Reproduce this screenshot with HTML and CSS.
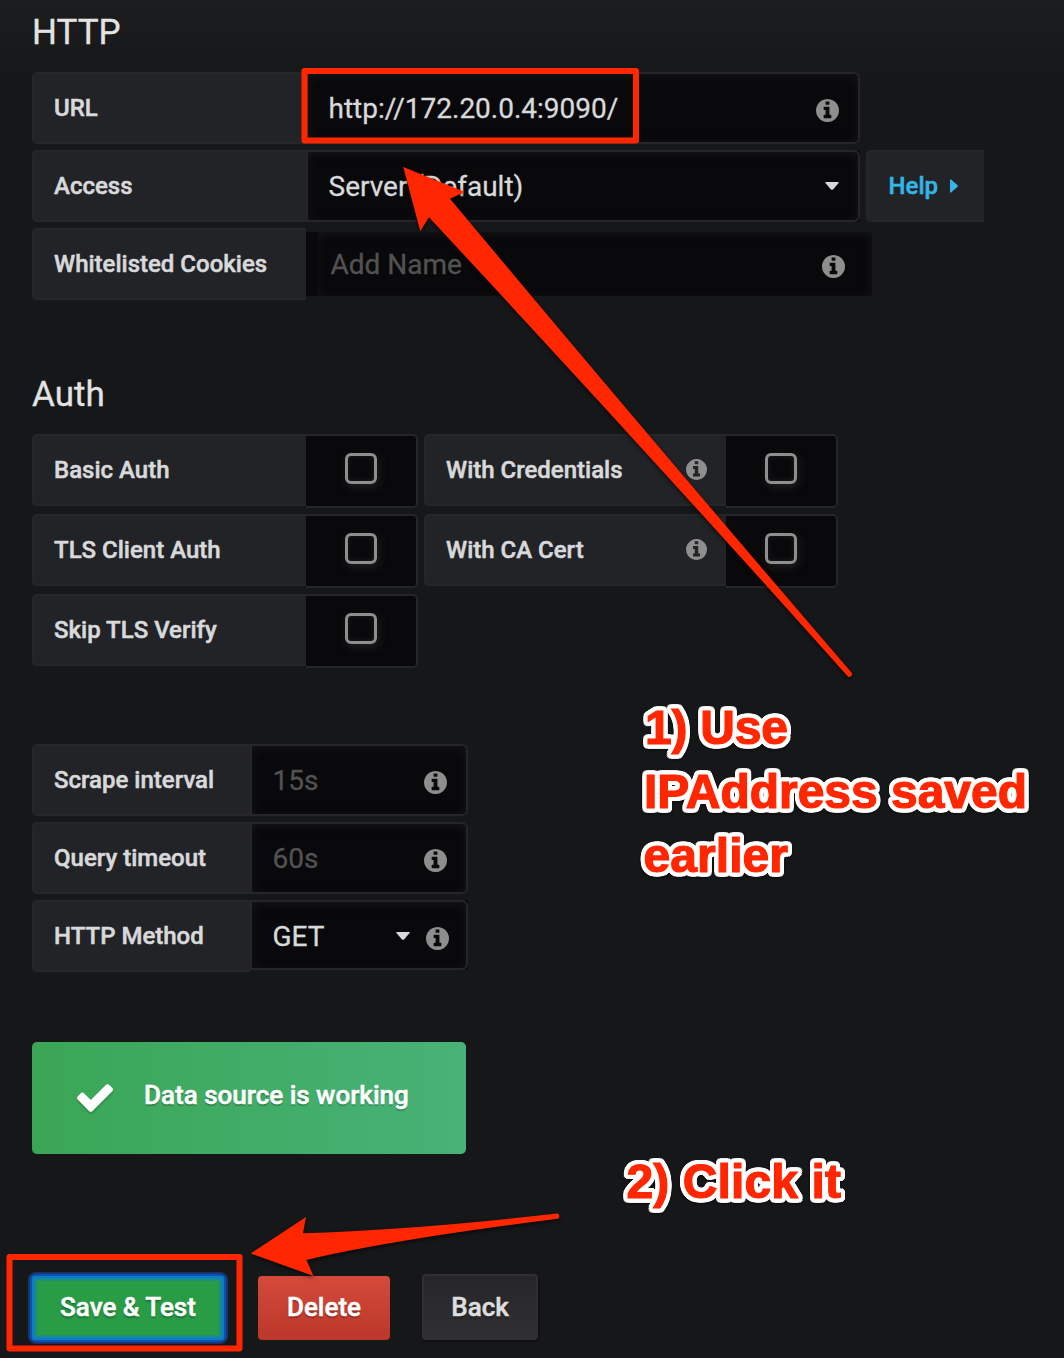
FILE: index.html
```html
<!DOCTYPE html>
<html lang="en">
<head>
<meta charset="utf-8">
<title>Data source settings</title>
<link rel="stylesheet" href="styles.css">
</head>
<body>
<svg class="defs" width="0" height="0" aria-hidden="true">
  <symbol id="info" viewBox="128 128 1536 1536"><path d="M1152 1376v-160q0-14-9-23t-23-9h-96v-512q0-14-9-23t-23-9h-320q-14 0-23 9t-9 23v160q0 14 9 23t23 9h96v320h-96q-14 0-23 9t-9 23v160q0 14 9 23t23 9h448q14 0 23-9t9-23zm-128-896v-160q0-14-9-23t-23-9h-192q-14 0-23 9t-9 23v160q0 14 9 23t23 9h192q14 0 23-9t9-23zm640 416q0 209-103 385.5t-279.5 279.5-385.5 103-385.5-103-279.5-279.5-103-385.5 103-385.5 279.5-279.5 385.5-103 385.5 103 279.5 279.5 103 385.5z"/></symbol>
  <symbol id="caret" viewBox="0 0 14 8"><path d="M1 0h12q1 0 .6 1L8 7.4q-1 .9-2 0L.4 1Q0 0 1 0z"/></symbol>
</svg>
<main class="page">
  <h3 class="heading">HTTP</h3>
  <section class="group group-http">
    <div class="row">
      <span class="label">URL</span>
      <div class="input wide"><span>http://172.20.0.4:9090/</span><svg class="info"><use href="#info"/></svg></div>
    </div>
    <div class="row">
      <span class="label">Access</span>
      <div class="select-wrap"><div class="input wide"><span>Server (Default)</span><svg class="caret"><use href="#caret"/></svg></div></div>
      <span class="label help">Help <svg class="caret-right" viewBox="0 0 8 14"><path d="M0 1q0-1 1-.6L7.4 6q.9 1 0 2L1 13.6Q0 14 0 13z"/></svg></span>
    </div>
    <div class="row">
      <span class="label">Whitelisted Cookies</span>
      <div class="tags"><div class="tag-input"><span>Add Name</span><svg class="info"><use href="#info"/></svg></div></div>
    </div>
  </section>

  <h3 class="heading">Auth</h3>
  <section class="group group-auth">
    <div class="row"><span class="label">Basic Auth</span><div class="switch"><i class="box"></i></div></div>
    <div class="row"><span class="label">With Credentials<svg class="info small"><use href="#info"/></svg></span><div class="switch"><i class="box"></i></div></div>
    <div class="row"><span class="label">TLS Client Auth</span><div class="switch"><i class="box"></i></div></div>
    <div class="row"><span class="label">With CA Cert<svg class="info small"><use href="#info"/></svg></span><div class="switch"><i class="box"></i></div></div>
    <div class="row"><span class="label">Skip TLS Verify</span><div class="switch"><i class="box"></i></div></div>
  </section>

  <section class="group group-query">
    <div class="row"><span class="label">Scrape interval</span><div class="input placeholder"><span>15s</span><svg class="info"><use href="#info"/></svg></div></div>
    <div class="row"><span class="label">Query timeout</span><div class="input placeholder"><span>60s</span><svg class="info"><use href="#info"/></svg></div></div>
    <div class="row"><span class="label">HTTP Method</span><div class="select-wrap"><div class="input method"><span>GET</span><svg class="caret"><use href="#caret"/></svg><svg class="info"><use href="#info"/></svg></div></div></div>
  </section>

  <div class="alert">
    <svg class="check" viewBox="121 334 1550 1188"><path d="M1671 566q0 40-28 68l-724 724-136 136q-28 28-68 28t-68-28l-136-136-362-362q-28-28-28-68t28-68l136-136q28-28 68-28t68 28l294 295 656-657q28-28 68-28t68 28l136 136q28 28 28 68z"/></svg>
    <span>Data source is working</span>
  </div>

  <div class="buttons">
    <button class="btn save">Save &amp; Test</button>
    <button class="btn delete">Delete</button>
    <button class="btn back">Back</button>
  </div>
</main>

<svg class="annotations" viewBox="0 0 1064 1358">
  <g class="shapes">
    <rect x="304.5" y="71" width="331.5" height="69.5"/>
    <rect x="9.5" y="1257" width="230" height="91.5"/>
    <path class="arrow" d="M403.3 167L464.7 192L450 198.7Q643 430 851.2 672.3A2.6 2.6 0 0 1 847.4 676Q642 446 429 217.3L420.3 231.3Z"/>
    <path class="arrow" d="M250.7 1253.5L306 1217L303 1233.2Q412 1230 557 1213.6A2.7 2.7 0 0 1 557.6 1218.8Q390 1240 306.5 1260L313.5 1276Z"/>
  </g>
  <g class="notes">
    <text x="645" y="743.5" textLength="143">1) Use</text>
    <text x="644" y="808" textLength="383">IPAddress saved</text>
    <text x="643.5" y="872" textLength="144.500">earlier</text>
    <text x="626.5" y="1198" textLength="214.500">2) Click it</text>
  </g>
</svg>
</body>
</html>
```
FILE: styles.css
```css
* { box-sizing: border-box; }

body {
  margin: 0;
  width: 1064px;
  height: 1358px;
  position: relative;
  overflow: hidden;
  background: linear-gradient(#1c1d1f 0, #161719 80px);
  color: #d8d9da;
  font-family: Roboto, "Liberation Sans", sans-serif;
  font-size: 28px;
  -webkit-text-stroke: .3px;
}

.defs { position: absolute; }

.page { padding: 10px 32px 0; }

.heading {
  margin: 0 0 20px;
  height: 42px;
  line-height: 45px;
  font-size: 35px;
  font-weight: 400;
  color: #e3e3e3;
}

.group { display: flex; flex-direction: column; gap: 6px; }
.group-http { margin-bottom: 72px; }

.row { display: flex; align-items: flex-start; height: 72px; }

.label {
  display: flex;
  align-items: center;
  justify-content: space-between;
  width: 274px;
  height: 72px;
  padding: 0 20px;
  border: 2px solid #252628;
  border-right: 0;
  border-radius: 5px 0 0 5px;
  background: #222327;
  font-size: 24px;
  font-weight: 500;
  white-space: nowrap;
  -webkit-text-stroke: .5px;
}

.input {
  display: flex;
  align-items: center;
  width: 218px;
  height: 72px;
  padding: 0 20px 0 20.5px;
  border: 2px solid #262628;
  border-radius: 0 6px 6px 0;
  background: #09090b;
  box-shadow: inset 0 2px 10px #151617;
}
.input.wide { width: 554px; }
.placeholder { color: #525252; }
.select-wrap { background: #09090b; }

.info {
  width: 23px;
  height: 23px;
  margin: 5px -1px 0 auto;
  fill: #8e8e8e;
}
.info.small { width: 21px; height: 21px; margin: 0 -.5px 1px auto; }
.caret { width: 14px; height: 8px; margin-left: auto; fill: #d8d9da; }
.wide .caret { margin-right: -1px; }

.help {
  width: 118px;
  margin-left: 6px;
  padding-left: 20.5px;
  color: #33b5e5;
}
.caret-right { width: 8px; height: 14px; margin-right: 6px; fill: #33b5e5; }

.tags { height: 64px; margin-top: 4px; padding-left: 12px; background: #09090b; }
.tag-input {
  display: flex;
  align-items: center;
  width: 554px;
  height: 64px;
  padding: 0 28px 0 12.5px;
  color: #525252;
  background: #09090b;
  box-shadow: inset 0 2px 10px #151617;
}

.group-auth {
  display: grid;
  grid-template-columns: 386px 414px;
  gap: 6px;
  margin-bottom: 76px;
}
.group-auth .row { height: 74px; }
.group-auth .row:nth-child(even) .label { width: 302px; }

.switch {
  display: flex;
  justify-content: center;
  width: 112px;
  height: 74px;
  padding-top: 17px;
  border: 2px solid #252628;
  border-left: 0;
  border-radius: 0 5px 5px 0;
  background: #09090b;
}
.box {
  width: 32px;
  height: 31px;
  border: 3px solid #8e8e8e;
  border-radius: 6px;
  box-shadow: 2px 3px 9px #1f1f21, inset 0 0 6px #1c1c1e;
}

.group-query .label { width: 218px; }
.method { height: 70px; padding: 2px 18px 0 20.5px; }
.method .info { margin-left: 16px; }

.alert {
  display: flex;
  align-items: center;
  width: 434px;
  height: 112px;
  margin-top: 70px;
  padding: 0 45px 6px;
  border-radius: 5px;
  background: linear-gradient(90deg, #3aa655, #48b278);
  color: #fff;
  font-size: 26px;
  font-weight: 500;
  -webkit-text-stroke: .5px;
}
.alert span { text-shadow: 0 2px 1px rgba(0, 0, 0, .25); }
.check {
  width: 36px;
  height: 28px;
  margin: 5px 31px 0 0;
  fill: #fff;
  filter: drop-shadow(0 2px 1px rgba(0, 0, 0, .2));
}

.buttons { display: flex; align-items: flex-end; gap: 32px; height: 66px; margin-top: 120px; }

.btn {
  height: 64px;
  padding: 0 0 2px;
  border: 0;
  border-radius: 4px;
  color: #fff;
  font: 500 26px/60px Roboto, "Liberation Sans", sans-serif;
  text-shadow: 0 2px 2px rgba(0, 0, 0, .3);
  -webkit-text-stroke: .5px;
}
.save {
  width: 192px;
  margin-right: 2px;
  background: #299c46;
  box-shadow: inset 0 0 0 3px #087fc4, inset 0 0 1px 5px #209070, 0 0 0 2px #0b50b5, 0 0 1px 4px #19366e;
}
.delete { width: 132px; background: linear-gradient(#d44a3a, #bb372a); }
.back {
  width: 116px;
  height: 66px;
  padding: 0;
  border: 2px solid #303032;
  background: linear-gradient(#262628, #303032);
  color: #dedede;
  box-shadow: 1px 2px 1px #101012;
}

.annotations {
  position: absolute;
  inset: 0;
  width: 1064px;
  height: 1358px;
}
.shapes rect { fill: none; stroke: #ff2600; stroke-width: 6; stroke-linejoin: round; }
.arrow { fill: #ff2600; filter: drop-shadow(0 2px 2px rgba(0, 0, 0, .6)); }
.notes {
  font: 700 48px "Liberation Sans", Arial, sans-serif;
  fill: #ff2600;
  stroke: #ff2600;
  stroke-width: 1.2;
  -webkit-text-stroke: 1.2px #ff2600;
  filter:
    drop-shadow(2px 0 0 #fff) drop-shadow(-2px 0 0 #fff)
    drop-shadow(0 2px 0 #fff) drop-shadow(0 -2px 0 #fff)
    drop-shadow(1px 1px 0 #fff) drop-shadow(-1px -1px 0 #fff)
    drop-shadow(1px -1px 0 #fff) drop-shadow(-1px 1px 0 #fff)
    drop-shadow(0 1px 1px rgba(0, 0, 0, .5));
}
```
